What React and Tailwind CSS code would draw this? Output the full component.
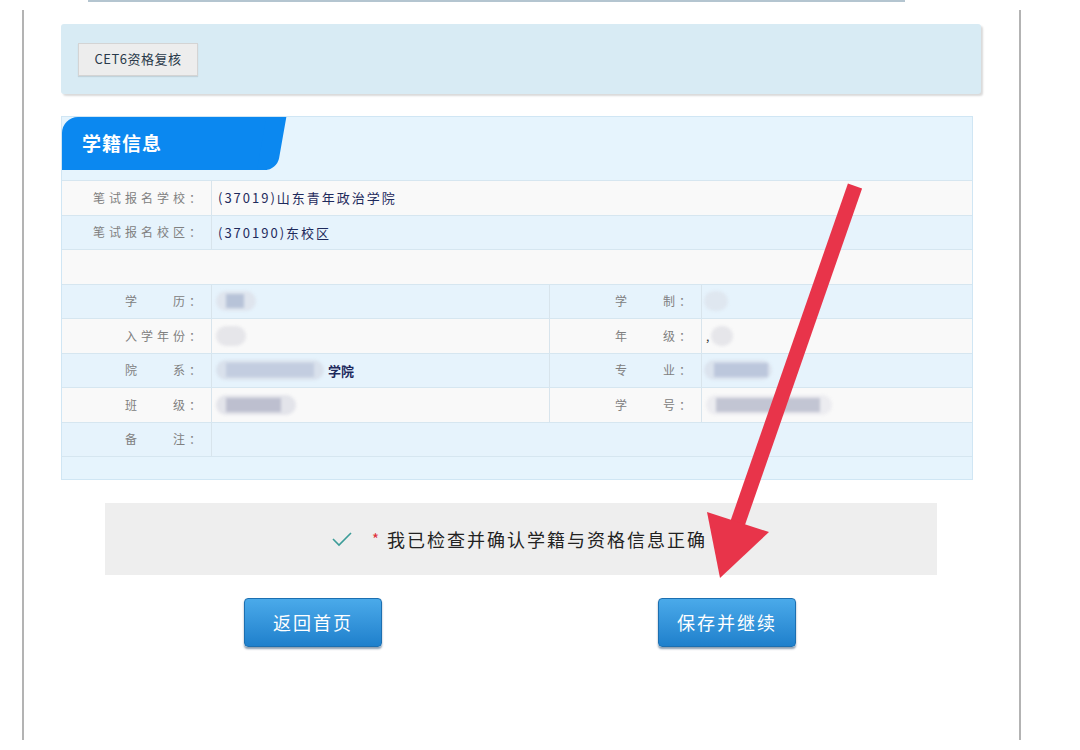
import React from "react";

const font = { fontFamily: '"Noto Sans CJK SC", "Noto Sans", sans-serif' };

const Label = ({ children }) => (
  <div className="flex items-center justify-end pr-[6px] text-[12px] tracking-[4px] text-[#808080] border-r border-[#d8e4ec]">
    {children}
  </div>
);

const Row = ({ tone, children, cols = "grid-cols-[150px_338px_152px_1fr]" }) => (
  <div
    className={`grid ${cols} h-[34.5px] border-b border-[#d6e6f0] ${
      tone === "w" ? "bg-[#f9f9f9]" : "bg-[#e6f3fc]"
    }`}
  >
    {children}
  </div>
);

// blurred placeholder for hidden personal data
const Blur = ({ w, inner, tint = "bg-[#b7c3d8]", pill = "bg-[#dfe5ee]" }) => (
  <div className={`relative h-[20px] rounded-full ${pill} blur-[1.5px]`} style={{ width: w }}>
    {inner && <div className={`absolute left-[10px] top-[3px] h-[14px] ${tint}`} style={{ width: inner }} />}
  </div>
);

const btn =
  "h-[49px] w-[138px] rounded-[4px] border border-[#1c6fb0] bg-gradient-to-b from-[#4aaaea] to-[#1e80cc] text-[18px] tracking-[2px] text-white shadow-[0_2px_2px_rgba(0,40,80,0.45)]";

export default function App() {
  return (
    <div className="relative h-[750px] w-[1080px] overflow-hidden bg-white" style={font}>
      {/* top edge line */}
      <div className="ml-[88px] h-[2px] w-[817px] bg-[#b4c5d0]" />

      <div className="ml-[22px] mt-[8px] h-[730px] w-[999px] border-x-2 border-[#b3b3b3] pl-[37px] pt-[14px]">
        {/* top panel */}
        <div className="flex h-[70px] w-[920px] items-center rounded-[3px] bg-[#d8ebf4] pl-[17px] shadow-[2px_2px_2px_rgba(0,0,0,0.15)]">
          <button className="h-[33px] w-[120px] border border-[#d4d4d4] bg-[#ededed] text-[13px] tracking-[0.5px] text-[#2a3a4a] shadow-[0_1px_1px_rgba(0,0,0,0.1)]">
            CET6资格复核
          </button>
        </div>

        {/* info panel */}
        <div className="mt-[22px] h-[364px] w-[912px] border border-[#d0e6f4] bg-[#e6f4fd]">
          <div className="flex h-[53px]">
            <div className="flex h-full w-[205px] items-center rounded-tl-[16px] bg-[#0b88f0] pl-[20px] text-[19px] font-bold tracking-[1px] text-white">
              学籍信息
            </div>
            <div className="-ml-[10px] h-full w-[20px] origin-bottom-left -skew-x-[10deg] rounded-br-[12px] bg-[#0b88f0]" />
          </div>

          <div className="mt-[10px] border-t border-[#d6e6f0]">
            <Row tone="w" cols="grid-cols-[150px_1fr]">
              <Label>笔试报名学校：</Label>
              <div className="flex items-center pl-[6px] text-[13px] tracking-[2px] text-[#1e2a5c]">(37019)山东青年政治学院</div>
            </Row>
            <Row tone="b" cols="grid-cols-[150px_1fr]">
              <Label>笔试报名校区：</Label>
              <div className="flex items-center pl-[6px] text-[13px] tracking-[2px] text-[#1e2a5c]">(370190)东校区</div>
            </Row>
            <Row tone="w" cols="grid-cols-1">
              <div />
            </Row>
            <Row tone="b">
              <Label>学&emsp;&emsp;历：</Label>
              <div className="flex items-center border-r border-[#d8e4ec] pl-[4px]">
                <Blur w={40} inner={18} />
              </div>
              <Label>学&emsp;&emsp;制：</Label>
              <div className="flex items-center pl-[2px]">
                <Blur w={24} pill="bg-[#dfe7f0]" />
              </div>
            </Row>
            <Row tone="w">
              <Label>入学年份：</Label>
              <div className="flex items-center border-r border-[#d8e4ec] pl-[4px]">
                <Blur w={30} pill="bg-[#e6e6ea]" />
              </div>
              <Label>年&emsp;&emsp;级：</Label>
              <div className="flex items-center gap-[2px] pl-[4px] text-[12px] text-[#333]">
                <span>,</span>
                <Blur w={22} pill="bg-[#e6e6ea]" />
              </div>
            </Row>
            <Row tone="b">
              <Label>院&emsp;&emsp;系：</Label>
              <div className="flex items-center gap-[4px] border-r border-[#d8e4ec] pl-[4px]">
                <Blur w={108} inner={88} tint="bg-[#c3cde0]" pill="bg-[#d9e1ec]" />
                <span className="text-[13px] font-bold text-[#1e2a5c]">学院</span>
              </div>
              <Label>专&emsp;&emsp;业：</Label>
              <div className="flex items-center pl-[2px]">
                <Blur w={68} inner={54} tint="bg-[#bcc7dc]" pill="bg-[#dbe3ee]" />
              </div>
            </Row>
            <Row tone="w">
              <Label>班&emsp;&emsp;级：</Label>
              <div className="flex items-center border-r border-[#d8e4ec] pl-[4px]">
                <Blur w={80} inner={55} tint="bg-[#bdbfcf]" pill="bg-[#e3e4ea]" />
              </div>
              <Label>学&emsp;&emsp;号：</Label>
              <div className="flex items-center pl-[4px]">
                <Blur w={126} inner={104} tint="bg-[#c2c5d3]" pill="bg-[#ececf0]" />
              </div>
            </Row>
            <Row tone="b" cols="grid-cols-[150px_1fr]">
              <Label>备&emsp;&emsp;注：</Label>
              <div />
            </Row>
          </div>
        </div>

        {/* confirm box */}
        <div className="ml-[44px] mt-[23px] flex h-[72px] w-[832px] items-center justify-center bg-[#eeeeee] pr-[4px]">
          <svg width="22" height="16" viewBox="0 0 22 16" className="mr-[19px]">
            <polyline points="2,8 8,14 20,2" fill="none" stroke="#3c9c98" strokeWidth="1.6" />
          </svg>
          <span className="mr-[8px] text-[15px] text-[#e0303a]">*</span>
          <span className="text-[18px] tracking-[2px] text-[#222]">我已检查并确认学籍与资格信息正确</span>
        </div>

        {/* buttons */}
        <div className="mt-[23px] flex">
          <button className={`ml-[183px] ${btn}`}>返回首页</button>
          <button className={`ml-[276px] ${btn}`}>保存并继续</button>
        </div>
      </div>

      {/* red annotation arrow */}
      <svg className="pointer-events-none absolute left-0 top-0" width="1080" height="750">
        <line x1="855" y1="186" x2="737" y2="525" stroke="#e8344a" strokeWidth="15" />
        <polygon points="707,512 769,532 720,578" fill="#e8344a" />
      </svg>
    </div>
  );
}
